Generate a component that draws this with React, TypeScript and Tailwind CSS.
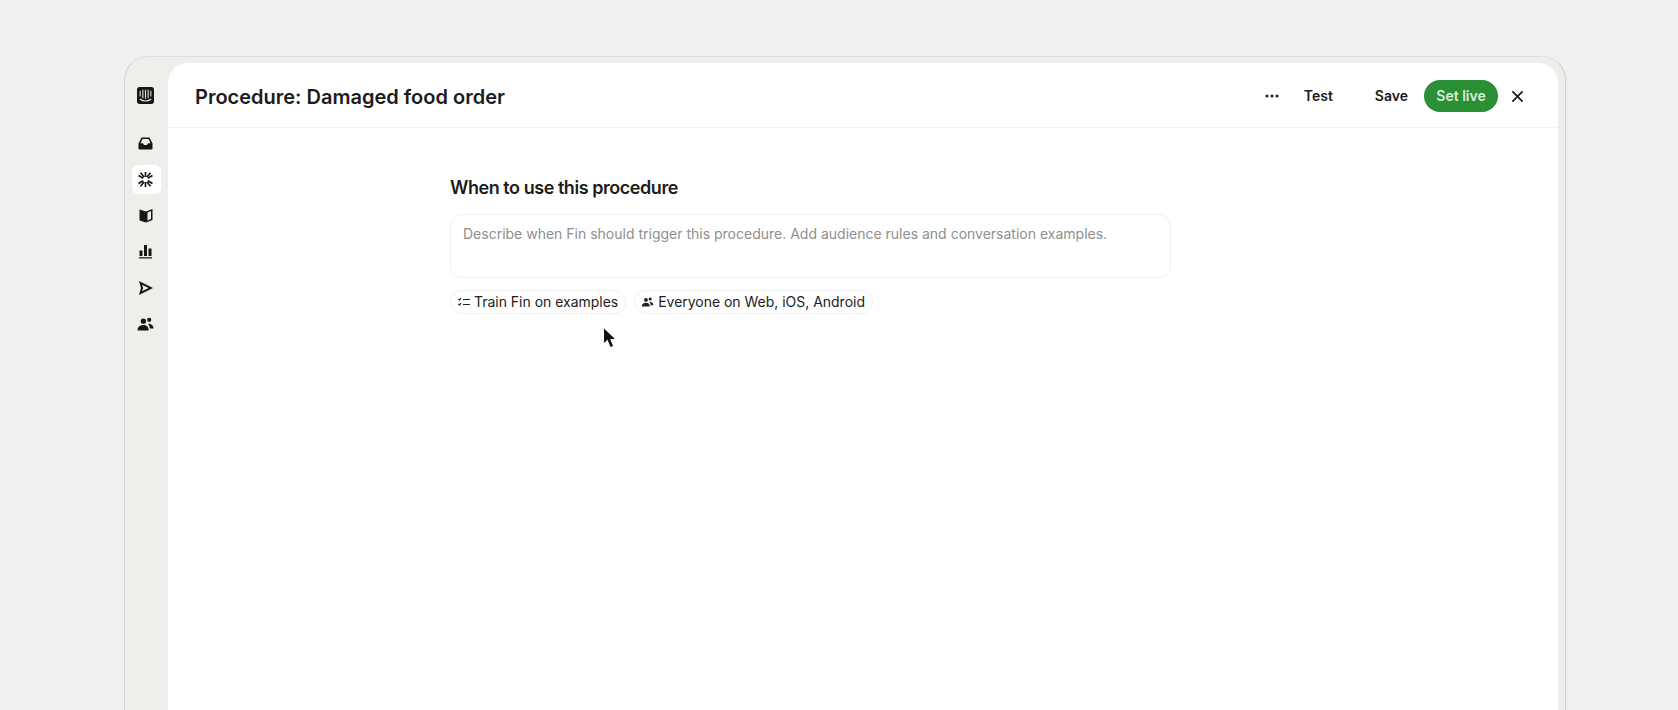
import React from "react";

const Nav = ({ active, children }: { active?: boolean; children: React.ReactNode }) => (
  <div className={"flex h-[29px] w-[29px] items-center justify-center rounded-[6px] pr-[1px] " + (active ? "bg-white" : "")}>
    {children}
  </div>
);

export default function App() {
  return (
    <div className="h-[710px] overflow-hidden bg-[#f0f0f0] pl-[124px] pr-[112px] pt-[56px] text-[#1a1a1a]" style={{ fontFamily: "Inter, sans-serif" }}>
      <div className="flex h-[700px] rounded-t-[24px] border border-b-0 border-t-[#dedfdb] border-x-[#d2d3cf] bg-[#eeeeeb] pr-[7px] pt-[6px]">
        <aside className="flex w-[43px] shrink-0 flex-col items-center pr-[1px] pt-[18px]">
          <Nav>
            <svg width="17" height="17" viewBox="0 0 16 16">
              <rect width="16" height="16" rx="2.500" fill="#161616" />
              <path d="M3 3.500v5.500M5.500 2.500v8M8 2.500v8.500M10.500 2.500v8M13 3.500v5.500" stroke="#d8d8d6" strokeWidth="1.100" />
              <path d="M3 11.500c3 2 7 2 10 0" stroke="#eeeeeb" strokeWidth="1.100" fill="none" strokeLinecap="round" />
            </svg>
          </Nav>
          <div className="mt-[19px] flex flex-col gap-[7px]">
            <Nav>
              <svg width="15" height="13" viewBox="0 0 15 13">
                <path d="M3.500 0.500h8L14.500 6.500v5a1 1 0 0 1-1 1h-12a1 1 0 0 1-1-1v-5z" fill="#161616" />
                <path d="M4.500 2h6L12.500 6.300H10L9 8H6L5 6.300H2.500z" fill="#eeeeeb" />
              </svg>
            </Nav>
            <Nav active>
              <svg width="15" height="15" viewBox="0 0 15 15" stroke="#161616" fill="none" strokeWidth="1.700">
                <path d="M7.500 0v5M7.500 10v5M0.500 3.500l4.700 2.800M14.500 3.500l-4.700 2.800M0.500 11.500l4.700-2.800M14.500 11.500l-4.700-2.800M2.500 0.800L6 5M12.500 0.800L9 5M2.500 14.200L6 10M12.500 14.200L9 10" />
              </svg>
            </Nav>
            <Nav>
              <svg width="14" height="15" viewBox="0 0 14 15">
                <path d="M0.500 1.500 7 3.500V14.500L0.500 12.500z" fill="#161616" />
                <path d="M7 3.500 13.500 1V12L7 14.500z" fill="#161616" />
                <path d="M8.500 4.500l3.500-1.400v8L8.500 12.500z" fill="#eeeeeb" />
              </svg>
            </Nav>
            <Nav>
              <svg width="13" height="15" viewBox="0 0 13 15" fill="#161616">
                <rect x="0.500" y="6.500" width="3" height="5.500" />
                <rect x="5" y="1" width="3" height="11" />
                <rect x="9.500" y="4.500" width="3" height="7.500" />
                <rect x="0" y="13" width="13" height="1.600" fill="#444444" />
              </svg>
            </Nav>
            <Nav>
              <svg width="15" height="14" viewBox="0 0 15 14">
                <path d="M1 0 15 7 1 14 3 7z" fill="#161616" />
                <path d="M4 3.700 10.500 7 4 10.300 5.200 7z" fill="#eeeeeb" />
              </svg>
            </Nav>
            <Nav>
              <svg width="17" height="14" viewBox="0 0 16 13" fill="#161616">
                <circle cx="6" cy="3.800" r="2.500" />
                <circle cx="11.500" cy="2.500" r="2" />
                <path d="M0.500 12.500c0-3 2.200-5 5.500-5s5 2 5 5z" />
                <path d="M10.500 6.200c3 0 5 1.500 5 4.500h-3.300c-.3-1.700-.8-3.200-1.700-4.500z" />
              </svg>
            </Nav>
          </div>
        </aside>
        <main className="min-w-0 flex-1 rounded-t-[20px] bg-white">
          <header className="flex h-[65px] items-center border-b border-dotted border-[#ececec] pl-[27px] pr-[35px] pt-[2px]">
            <h1 className="flex-1 pt-[1px] text-[20px] font-semibold leading-[28px] text-[#1c1c1c]">
              Procedure: Damaged food order
            </h1>
            <div className="flex items-center text-[14px] font-medium leading-[20px]">
              <span className="flex h-[32px] w-[32px] items-center justify-center rounded-full">
                <svg width="14" height="4" viewBox="0 0 14 4" fill="#1c1c1c">
                  <circle cx="2" cy="2" r="1.500" />
                  <circle cx="7" cy="2" r="1.500" />
                  <circle cx="12" cy="2" r="1.500" />
                </svg>
              </span>
              <span className="ml-[16px] font-semibold">Test</span>
              <span className="ml-[42px] font-semibold">Save</span>
              <span className="ml-[16px] flex h-[32px] w-[74px] items-center justify-center rounded-full bg-[#2b8f35] font-semibold text-[#d9ecd9]">
                Set live
              </span>
              <span className="ml-[13px] flex h-[12px] w-[12px] items-center justify-center">
                <svg width="11" height="11" viewBox="0 0 12 12" stroke="#1c1c1c" strokeWidth="1.900" strokeLinecap="round">
                  <path d="M1 1l10 10M11 1L1 11" />
                </svg>
              </span>
            </div>
          </header>
          <section className="relative pl-[282px] pt-[46px]">
            <h2 className="text-[18px] font-semibold leading-[27px] tracking-[-0.45px] text-[#1c1c1c]">
              When to use this procedure
            </h2>
            <div className="mt-[13px] h-[64px] w-[721px] rounded-[12px] border border-[#f0f0f0] px-[12px] pb-[8px] pt-[9px] text-[14px] leading-[20px] text-[#8f8f8f]">
              Describe when Fin should trigger this procedure. Add audience rules and conversation examples.
            </div>
            <div className="mt-[12px] flex gap-[8px] text-[14px] leading-[20px] tracking-[-0.02px] text-[#222222]">
              <span className="flex h-[24px] items-center gap-[4px] rounded-full border border-[#f0f0f0] pl-[7px] pr-[7px]">
                <svg width="12" height="10" viewBox="0 0 12 10" stroke="#222222" strokeWidth="1.200" fill="none">
                  <path d="M0.500 2l1 1 1.500-2M0.500 7l1 1 1.500-2M5 2.500h7M5 7.500h7" />
                </svg>
                Train Fin on examples
              </span>
              <span className="flex h-[24px] items-center gap-[4px] rounded-full border border-[#f0f0f0] pl-[6px] pr-[7px]">
                <svg width="13" height="10" viewBox="0 0 16 13" fill="#222222">
                  <circle cx="6" cy="3.800" r="2.500" />
                  <circle cx="11.500" cy="2.500" r="2" />
                  <path d="M0.500 12.500c0-3 2.200-5 5.500-5s5 2 5 5z" />
                  <path d="M10.500 6.200c3 0 5 1.500 5 4.500h-3.300c-.3-1.700-.8-3.200-1.700-4.500z" />
                </svg>
                Everyone on Web, iOS, Android
              </span>
            </div>
            <svg className="absolute left-[435px] top-[200px]" width="13" height="20" viewBox="0 0 13 20">
              <path d="M1 0.500V15L4.500 11.800 7.500 19 10 18 7.200 11H12z" fill="#111111" />
            </svg>
          </section>
        </main>
      </div>
    </div>
  );
}
